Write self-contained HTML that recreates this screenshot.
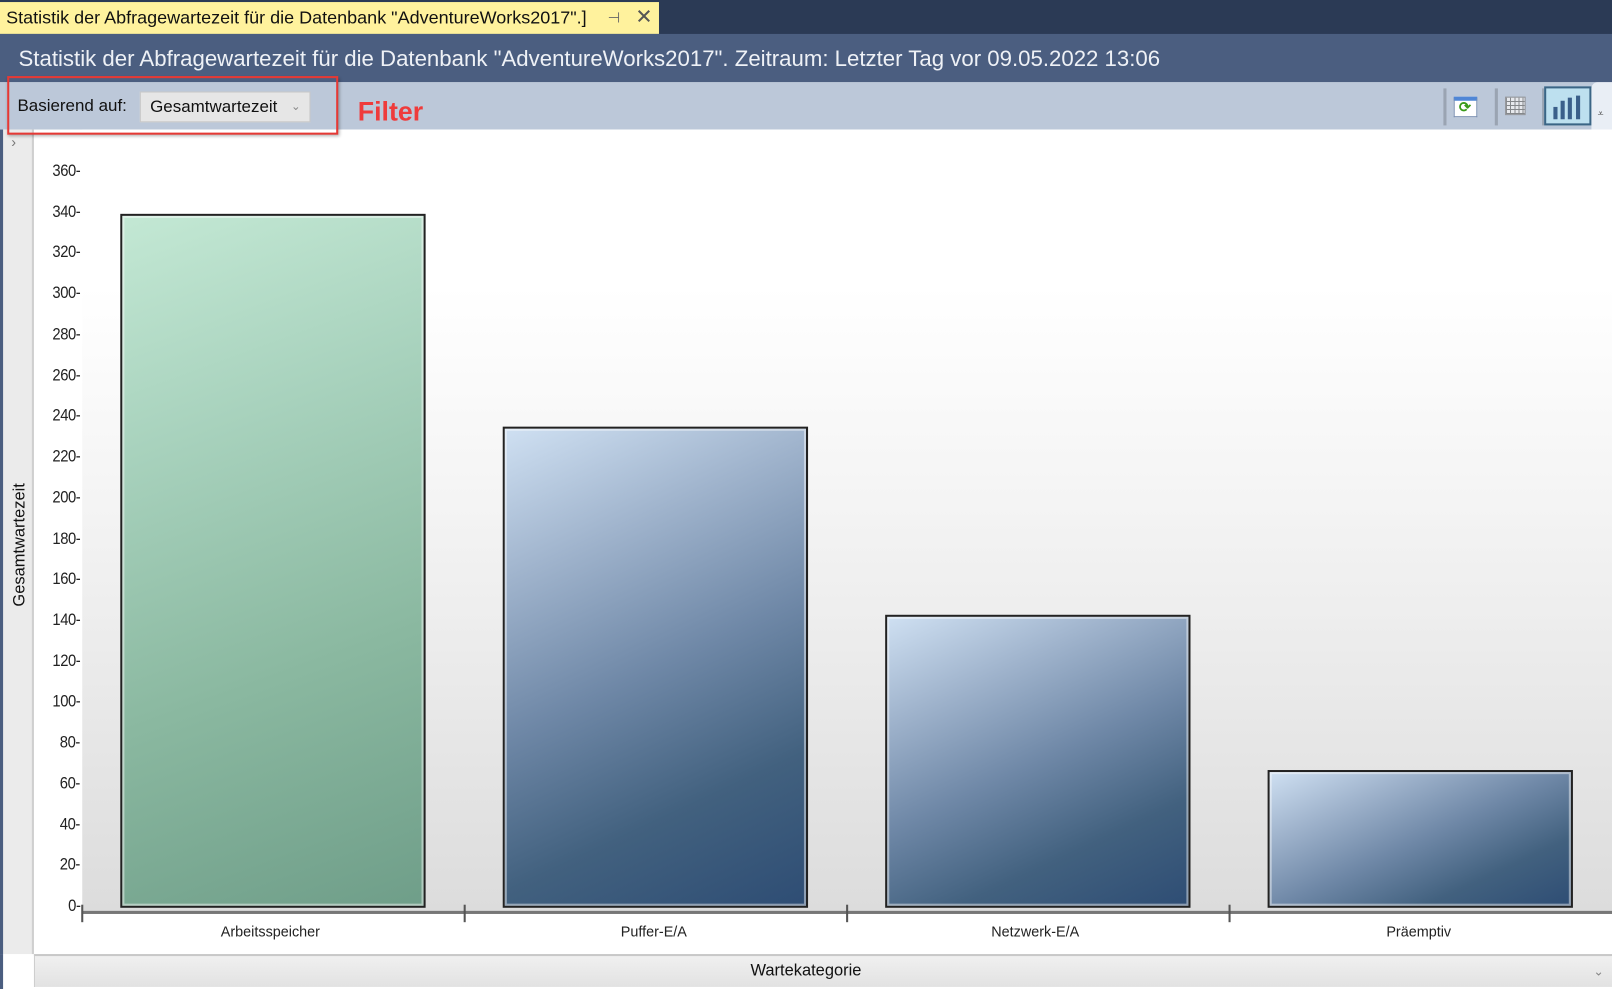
<!DOCTYPE html>
<html><head><meta charset="utf-8"><style>
*{margin:0;padding:0;box-sizing:border-box}
body{width:1612px;height:989px;overflow:hidden;background:#fff;font-family:"Liberation Sans",sans-serif}
#w{position:absolute;left:0;top:0;width:1568px;height:962px;transform:scale(1.02806,1.02807);transform-origin:0 0}
.a{position:absolute}
.yl{position:absolute;right:1490px;font-size:16px;color:#222;letter-spacing:-0.5px;transform:scaleX(0.9);transform-origin:right}
.bar{position:absolute;border:2px solid #222;bottom:79px}
.bar i{position:absolute;inset:0;border:2px solid rgba(255,255,255,0.45)}
.blue{background:linear-gradient(155deg,#cfe0f2 0%,#9fb3cc 25%,#6f88a7 50%,#42617f 75%,#2e4d74 100%)}
.green{background:linear-gradient(160deg,#c3e8d4 0%,#a8d2bd 30%,#8ab8a0 65%,#6f9e89 100%)}
.xl{position:absolute;top:898px;font-size:14px;color:#222;width:200px;text-align:center}
.tk{position:absolute;top:880px;width:2px;height:17px;background:#555}
</style></head><body><div id="w">
<div class="a" style="left:0;top:0;width:1568px;height:34px;background:#2b3a55"></div>
<div class="a" style="left:0;top:2px;width:641px;height:31px;background:#fff29d;font-size:17.5px;line-height:31px;padding-left:6px;color:#111;white-space:nowrap">Statistik der Abfragewartezeit für die Datenbank "AdventureWorks2017".]<span style="position:absolute;left:591px;color:#666;font-size:14px">⊣</span><span style="position:absolute;left:618px;color:#555;font-size:20px">✕</span></div>
<div class="a" style="left:0;top:33px;width:1568px;height:47px;background:#4b5e80;color:#eef1f6;font-size:21.6px;line-height:47px;padding-left:18px;white-space:nowrap">Statistik der Abfragewartezeit für die Datenbank "AdventureWorks2017". Zeitraum: Letzter Tag vor 09.05.2022 13:06</div>
<div class="a" style="left:0;top:80px;width:1568px;height:46px;background:#bcc8d9"></div>
<div class="a" style="left:17px;top:94px;font-size:16.5px;color:#111">Basierend auf:</div>
<div class="a" style="left:136px;top:89px;width:166px;height:30px;background:#e6e6e6;border:1px solid #c8c8c8;font-size:16.5px;line-height:28px;padding-left:9px;color:#111">Gesamtwartezeit<span style="position:absolute;left:146px;color:#888;font-size:11px">⌄</span></div>
<div class="a" style="left:1404px;top:86px;width:3px;height:36px;background:#9aa4b2"></div>
<div class="a" style="left:1454px;top:86px;width:3px;height:36px;background:#9aa4b2"></div>
<div class="a" style="left:1500px;top:86px;width:3px;height:36px;background:#9aa4b2"></div>
<div class="a" style="left:1414px;top:94px;width:23px;height:20px;background:#fff;border:1px solid #7a8fb0;border-top:4px solid #4f86d6"><span style="position:absolute;left:4px;top:-2px;color:#3a9a1a;font-size:14px;font-weight:bold">⟳</span></div>
<div class="a" style="left:1464px;top:94px;width:20px;height:18px;background:repeating-linear-gradient(90deg,#777 0 1px,transparent 1px 4px),repeating-linear-gradient(0deg,#777 0 1px,#f2f2f2 1px 4px);border:1px solid #888;opacity:.8"></div>
<div class="a" style="left:1502px;top:84px;width:46px;height:38px;background:#bde0ef;border:2px solid #3b6585"></div>
<div class="a" style="left:1511px;top:104px;width:4px;height:12px;background:#3a5f8a"></div>
<div class="a" style="left:1518px;top:98px;width:4px;height:18px;background:#3a5f8a"></div>
<div class="a" style="left:1525px;top:95px;width:4px;height:21px;background:#3a5f8a"></div>
<div class="a" style="left:1533px;top:93px;width:4px;height:23px;background:#3a5f8a"></div>
<div class="a" style="left:1548px;top:80px;width:20px;height:46px;background:#e9eef5;border-radius:6px 0 0 0"><span style="position:absolute;left:6px;top:26px;font-size:10px;color:#444">⩡</span></div>
<div class="a" style="left:0;top:126px;width:33px;height:802px;background:#ebebeb;border-right:2px solid #cfcfcf;border-left:3px solid #4b5e80"></div>
<div class="a" style="left:11px;top:130px;color:#777;font-size:14px">›</div>
<div class="a" style="left:20px;top:530px;transform:translate(-50%,-50%) rotate(-90deg);font-size:16px;color:#111;white-space:nowrap">Gesamtwartezeit</div>
<div class="a" style="left:80px;top:126px;width:1488px;height:763px;background:linear-gradient(180deg,#fff 0%,#fff 20%,#f3f3f3 50%,#dcdcdc 100%)"></div>
<div id="yl"></div>
<div class="bar green" style="left:117px;width:297px;top:208px"><i></i></div>
<div class="bar blue" style="left:489px;width:297px;top:415px"><i></i></div>
<div class="bar blue" style="left:861px;width:297px;top:598px"><i></i></div>
<div class="bar blue" style="left:1233px;width:297px;top:749px"><i></i></div>
<div class="a" style="left:80px;top:886px;width:1488px;height:3px;background:#777"></div>
<div class="tk" style="left:79px"></div><div class="tk" style="left:451px"></div><div class="tk" style="left:823px"></div><div class="tk" style="left:1195px"></div>
<div class="xl" style="left:163px">Arbeitsspeicher</div>
<div class="xl" style="left:536px">Puffer-E/A</div>
<div class="xl" style="left:907px">Netzwerk-E/A</div>
<div class="xl" style="left:1280px">Präemptiv</div>
<div class="a" style="left:33px;top:928px;width:1535px;height:32px;background:linear-gradient(#f0f0f0,#e2e2e2);border-top:2px solid #c8c8c8;border-left:1px solid #ccc;font-size:16px;line-height:30px;color:#111"><span style="position:absolute;left:696px">Wartekategorie</span><span style="position:absolute;right:8px;color:#888;font-size:12px">⌄</span></div>
<div class="a" style="left:0;top:928px;width:3px;height:34px;background:#4b5e80"></div>
<div class="a" style="left:7px;top:74px;width:322px;height:57px;border:2px solid #e53935;box-shadow:1px 2px 3px rgba(0,0,0,.3)"></div>
<div class="a" style="left:348px;top:93px;font-size:26px;font-weight:bold;color:#ef3b3b">Filter</div>
<script>
var h='';for(var v=0;v<=360;v+=20){var y=883-v*715/360;h+='<div class="yl" style="top:'+(y-10)+'px">'+v+'-</div>';}
document.getElementById('yl').outerHTML=h;
</script>
</div></body></html>
